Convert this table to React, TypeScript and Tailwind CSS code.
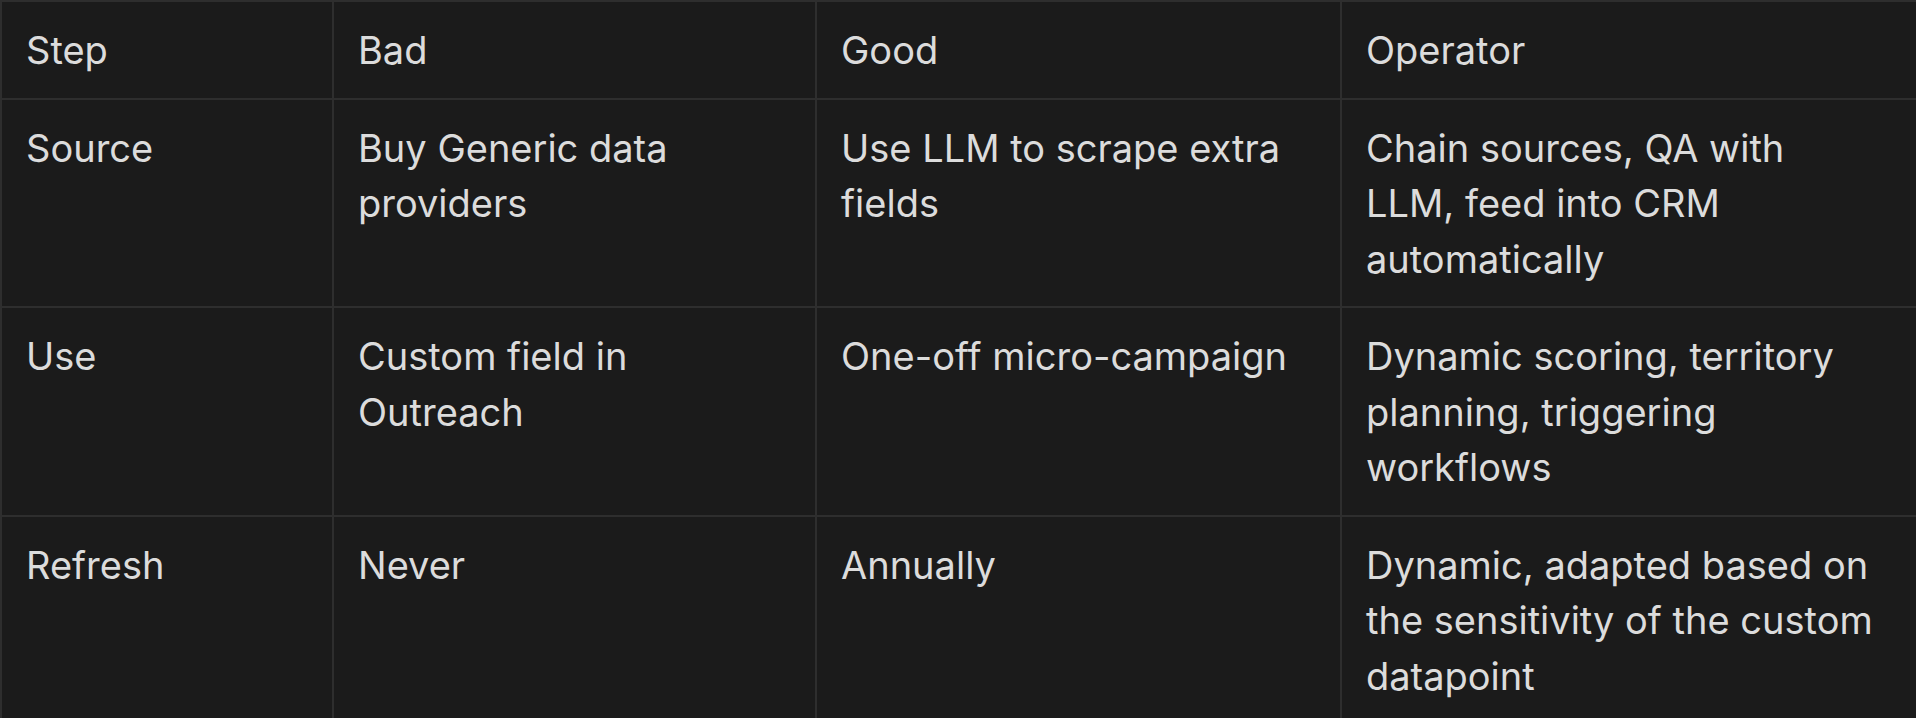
const rows = [
  [["Source"], ["Buy Generic data", "providers"], ["Use LLM to scrape extra", "fields"], ["Chain sources, QA with", "LLM, feed into CRM", "automatically"]],
  [["Use"], ["Custom field in", "Outreach"], ["One-off micro-campaign"], ["Dynamic scoring, territory", "planning, triggering", "workflows"]],
  [["Refresh"], ["Never"], ["Annually"], ["Dynamic, adapted based on", "the sensitivity of the custom", "datapoint"]],
];

const head = ["Step", "Bad", "Good", "Operator"];

function Lines({ lines }: { lines: string[] }) {
  return (
    <>
      {lines.map((l, i) => (
        <span key={i} className="block whitespace-nowrap">
          {l}
        </span>
      ))}
    </>
  );
}

export default function App() {
  return (
    <div
      className="h-[718px] w-[1916px] overflow-hidden bg-[#1b1b1b] text-[#dcdcdc]"
      style={{ fontFamily: "Inter, 'Noto Sans', sans-serif" }}
    >
      <table className="w-[1916px] table-fixed border-collapse text-[38px] leading-[55.5px]">
        <colgroup>
          <col className="w-[332px]" />
          <col className="w-[483px]" />
          <col className="w-[525px]" />
          <col className="w-[576px]" />
        </colgroup>
        <thead>
          <tr>
            {head.map((h) => (
              <th
                key={h}
                className="border-2 border-[#2e2e2e] px-[24px] pt-[21px] pb-[19px] text-left align-top font-normal"
              >
                {h}
              </th>
            ))}
          </tr>
        </thead>
        <tbody>
          {rows.map((r) => (
            <tr key={r[0][0]}>
              {r.map((c, i) => (
                <td
                  key={i}
                  className="border-2 border-[#2e2e2e] px-[24px] pt-[21px] pb-[19px] align-top"
                >
                  <Lines lines={c} />
                </td>
              ))}
            </tr>
          ))}
        </tbody>
      </table>
    </div>
  );
}
